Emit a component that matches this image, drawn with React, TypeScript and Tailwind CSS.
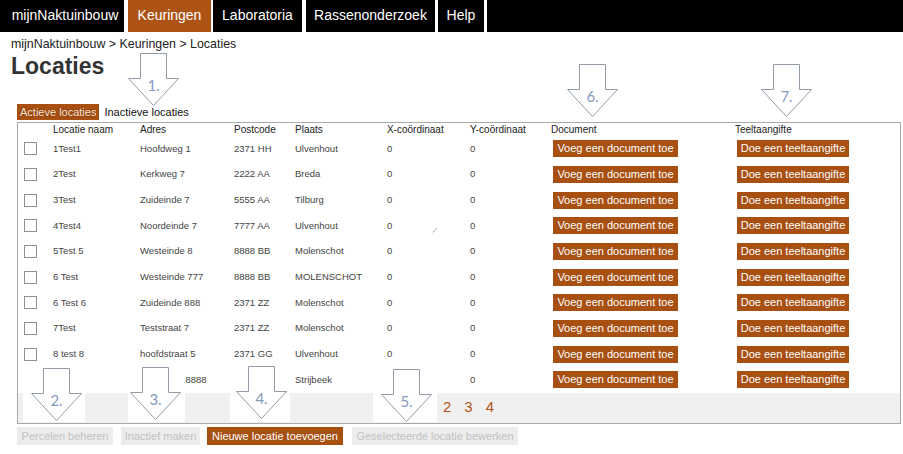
import React from 'react';

const rows = [
  { naam: '1Test1', adres: 'Hoofdweg 1', postcode: '2371 HH', plaats: 'Ulvenhout' },
  { naam: '2Test', adres: 'Kerkweg 7', postcode: '2222 AA', plaats: 'Breda' },
  { naam: '3Test', adres: 'Zuideinde 7', postcode: '5555 AA', plaats: 'Tilburg' },
  { naam: '4Test4', adres: 'Noordeinde 7', postcode: '7777 AA', plaats: 'Ulvenhout' },
  { naam: '5Test 5', adres: 'Westeinde 8', postcode: '8888 BB', plaats: 'Molenschot' },
  { naam: '6 Test', adres: 'Westeinde 777', postcode: '8888 BB', plaats: 'MOLENSCHOT' },
  { naam: '6 Test 6', adres: 'Zuideinde 888', postcode: '2371 ZZ', plaats: 'Molenschot' },
  { naam: '7Test', adres: 'Teststraat 7', postcode: '2371 ZZ', plaats: 'Molenschot' },
  { naam: '8 test 8', adres: 'hoofdstraat 5', postcode: '2371 GG', plaats: 'Ulvenhout' },
  { naam: '9 Test', adres: 'Hoofdweg 8888', postcode: '4884 AA', plaats: 'Strijbeek' },
];

const cols = 'grid grid-cols-[35px_87px_94px_61px_92px_83px_81px_184px_1fr]';

// numbered callout arrow, drawn over the page
function Arrow({ className, label }: { className: string; label: string }) {
  return (
    <div className={`absolute w-[51px] h-[53px] ${className}`}>
      <svg width="51" height="53" viewBox="0 0 51 53" className="absolute left-0 top-0">
        <polygon
          points="12.5,0.5 38.5,0.5 38.5,25.5 50.5,25.5 25.5,52.5 0.5,25.5 12.5,25.5"
          fill="white"
          stroke="#939ca6"
          strokeWidth="1"
        />
      </svg>
      <span className="absolute left-0 right-0 top-[25px] text-center font-['Lato',sans-serif] text-[15px] leading-[15px] text-[#8599bb]">
        {label}
      </span>
    </div>
  );
}

export default function App() {
  return (
    <div className="relative w-[903px] h-[454px] overflow-hidden bg-white font-['Liberation_Sans',Arial,sans-serif]">
      {/* Top menu */}
      <nav className="flex h-[32px] text-[14px] text-white">
        <a className="flex w-[124px] items-center justify-center bg-black pl-[6px] pb-[2px]">mijnNaktuinbouw</a>
        <a className="ml-[4px] flex w-[83px] items-center justify-center bg-[#ad5316] pb-[2px]">Keuringen</a>
        <a className="ml-[2px] flex w-[89px] items-center justify-center bg-black pb-[2px]">Laboratoria</a>
        <a className="ml-[4px] flex w-[129px] items-center justify-center bg-black pb-[2px]">Rassenonderzoek</a>
        <a className="ml-[3px] flex w-[46px] items-center justify-center bg-black pb-[2px]">Help</a>
        <div className="ml-[3px] flex-1 bg-black" />
      </nav>

      <div className="pl-[11px] pt-[5px]">
        <div className="text-[12.4px] leading-[14px] text-[#222]">mijnNaktuinbouw &gt; Keuringen &gt; Locaties</div>
        <h1 className="mt-[2px] text-[23px] font-bold leading-[26px] text-[#333]">Locaties</h1>

        {/* Tabs */}
        <div className="ml-[6px] mt-[25px] flex h-[16px] items-center text-[11px] leading-[16px]">
          <span className="h-[16px] bg-[#a84f12] px-[3px] text-[#fde8d8] [text-shadow:0_0_2px_#6a2a00]">Actieve locaties</span>
          <span className="ml-[5px] text-[#111]">Inactieve locaties</span>
        </div>

        {/* Table */}
        <div className="ml-[6px] mt-[2px] w-[884px] border border-[#a9a9a9]">
          <div className={`${cols} h-[13px] pt-[1px] text-[10px] leading-[12px] text-[#222]`}>
            <div />
            <div>Locatie naam</div>
            <div>Adres</div>
            <div>Postcode</div>
            <div>Plaats</div>
            <div>X-coördinaat</div>
            <div>Y-coördinaat</div>
            <div>Document</div>
            <div>Teeltaangifte</div>
          </div>
          {rows.map((r) => (
            <div key={r.naam} className={`${cols} h-[25.67px] items-center text-[9.5px] text-[#444]`}>
              <div className="pl-[6px]">
                <span className="block h-[13px] w-[13px] border border-[#8f8f8f] bg-white" />
              </div>
              <div>{r.naam}</div>
              <div>{r.adres}</div>
              <div>{r.postcode}</div>
              <div>{r.plaats}</div>
              <div>0</div>
              <div>0</div>
              <div className="pl-[2px]">
                <span className="block h-[17px] w-[125px] bg-[#a84f12] text-center text-[11px] leading-[17px] text-white">
                  Voeg een document toe
                </span>
              </div>
              <div className="pl-[2px]">
                <span className="block h-[17px] w-[112px] bg-[#a84f12] text-center text-[11px] leading-[17px] text-white">
                  Doe een teeltaangifte
                </span>
              </div>
            </div>
          ))}
          {/* Pager */}
          <div className="flex h-[30px] items-center gap-[13px] bg-[#f0f0f0] pl-[425px] text-[15px] text-[#b3531a]">
            <a>2</a>
            <a>3</a>
            <a>4</a>
          </div>
        </div>

        {/* Actions */}
        <div className="ml-[6px] mt-[3px] flex text-[11px] leading-[18px]">
          <span className="h-[18px] w-[96px] bg-[#ececec] text-center text-[#c2c2c2]">Percelen beheren</span>
          <span className="ml-[8px] h-[18px] w-[79px] bg-[#ececec] text-center text-[#c2c2c2]">Inactief maken</span>
          <span className="ml-[7px] h-[18px] w-[136px] bg-[#a84f12] text-center text-white">Nieuwe locatie toevoegen</span>
          <span className="ml-[9px] h-[18px] w-[166px] bg-[#ececec] text-center text-[#c2c2c2]">Geselecteerde locatie bewerken</span>
        </div>
      </div>

      {/* Callout overlays, pasted with a white background */}
      <div className="absolute left-[23px] top-[363px] h-[59px] w-[62px] bg-white" />
      <div className="absolute left-[128px] top-[363px] h-[59px] w-[57px] bg-white" />
      <div className="absolute left-[230px] top-[363px] h-[59px] w-[60px] bg-white" />
      <div className="absolute left-[373px] top-[363px] h-[59px] w-[64px] bg-white" />

      <Arrow className="left-[128px] top-[53px]" label="1." />
      <Arrow className="left-[31px] top-[368px]" label="2." />
      <Arrow className="left-[130px] top-[367px]" label="3." />
      <Arrow className="left-[236px] top-[366px]" label="4." />
      <Arrow className="left-[381px] top-[369px]" label="5." />
      <Arrow className="left-[567px] top-[64px]" label="6." />
      <Arrow className="left-[761px] top-[64px]" label="7." />

      <svg width="6" height="6" viewBox="0 0 6 6" className="absolute left-[432px] top-[227px]">
        <line x1="0.5" y1="5.5" x2="5" y2="1" stroke="#9aa3ad" strokeWidth="0.8" />
      </svg>
    </div>
  );
}
